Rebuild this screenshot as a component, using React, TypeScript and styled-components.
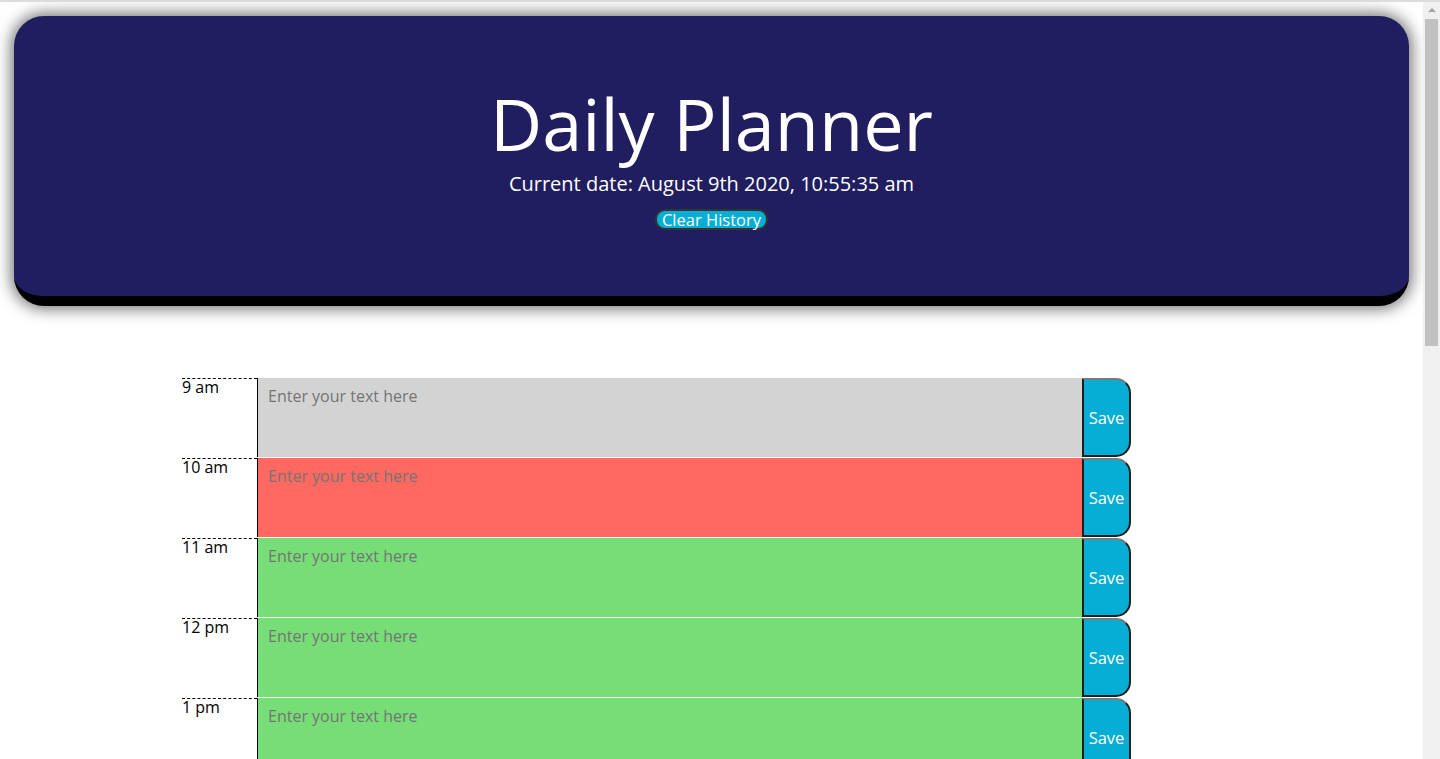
import { createGlobalStyle } from 'styled-components'
import styled from 'styled-components'

type Status = 'past' | 'present' | 'future'

interface IHourRow {
  label: string
  status: Status
}

const hours: IHourRow[] = [
  { label: '9 am', status: 'past' },
  { label: '10 am', status: 'present' },
  { label: '11 am', status: 'future' },
  { label: '12 pm', status: 'future' },
  { label: '1 pm', status: 'future' },
  { label: '2 pm', status: 'future' },
  { label: '3 pm', status: 'future' },
  { label: '4 pm', status: 'future' },
  { label: '5 pm', status: 'future' },
]

const statusColors: Record<Status, string> = {
  past: '#d3d3d3',
  present: '#ff6961',
  future: '#77dd77',
}

const App = () => {
  return (
    <>
      <GlobalStyle />
      <StyledHeader>
        <StyledTitle>Daily Planner</StyledTitle>
        <StyledLead>Current date: August 9th 2020, 10:55:35 am</StyledLead>
        <StyledClearButton>Clear History</StyledClearButton>
      </StyledHeader>
      <StyledPlanner>
        {hours.map((hour) => (
          <StyledRow key={hour.label}>
            <StyledHour>{hour.label}</StyledHour>
            <StyledTextarea $status={hour.status} placeholder="Enter your text here" />
            <StyledSaveButton>Save</StyledSaveButton>
          </StyledRow>
        ))}
      </StyledPlanner>
      {/* window scrollbar, drawn since the headless page hides its own */}
      <StyledScrollbar>
        <StyledScrollArrow />
        <StyledScrollThumb />
      </StyledScrollbar>
    </>
  )
}

export default App

const GlobalStyle = createGlobalStyle`
  html {
    border-top: 2px solid #dcdcdc;
  }

  body {
    margin: 0 17px 0 0;
    font-family: 'Open Sans', 'Noto Sans', sans-serif;
    font-size: 16px;
    line-height: 1;
    color: #000;
    background: #fff;
  }

  ::-webkit-scrollbar {
    width: 0;
  }
`

const StyledHeader = styled.header`
  margin: 14px 14px 0;
  padding: 64px 32px 0;
  height: 216px;
  box-sizing: content-box;
  background: #201e5f;
  color: #fff;
  text-align: center;
  border-radius: 30px;
  border-bottom: 10px solid #000;
  box-shadow: 0 0 15px 3px rgba(0, 0, 0, 0.55);
`

const StyledTitle = styled.h1`
  margin: 0;
  font-size: 72px;
  font-weight: 400;
  line-height: 1.2;
`

const StyledLead = styled.p`
  margin: 3px 0 0;
  font-size: 20px;
  line-height: 1.5;
`

const StyledClearButton = styled.button`
  display: inline-block;
  margin-top: 10px;
  padding: 0 5px;
  font-family: inherit;
  font-size: 16.5px;
  line-height: 17px;
  color: #fff;
  background: #06aed5;
  border: 2px solid #333;
  border-radius: 10px;
`

const StyledPlanner = styled.main`
  padding: 71px 0 40px 182px;
`

const StyledRow = styled.div`
  display: grid;
  grid-template-columns: 75px 825px 49px;
  height: 80px;
  box-sizing: border-box;
  border-top: 1px solid #fff;
`

const StyledHour = styled.div`
  border-top: 1px dashed #000;
  background: #fff;
  color: #000;
`

const StyledTextarea = styled.textarea<{ $status: Status }>`
  margin: 0;
  padding: 10px;
  box-sizing: border-box;
  height: 100%;
  resize: none;
  border: none;
  border-left: 1px solid #000;
  outline: none;
  font-family: inherit;
  font-size: 16px;
  line-height: 1;
  color: #fff;
  background: ${({ $status }) => statusColors[$status]};

  &::placeholder {
    color: #757575;
  }
`

const StyledSaveButton = styled.button`
  margin: 0;
  padding: 0;
  height: 100%;
  box-sizing: border-box;
  font-family: inherit;
  font-size: 16.5px;
  color: #fff;
  background: #06aed5;
  border: 2px solid #1e1e1e;
  border-top-color: #7a7a7a;
  border-radius: 0 15px 15px 0;
`

const StyledScrollbar = styled.div`
  position: fixed;
  top: 2px;
  right: 0;
  bottom: 0;
  width: 17px;
  display: flex;
  flex-direction: column;
  align-items: center;
  background: #f0f0f0;
`

const StyledScrollArrow = styled.div`
  margin-top: 6px;
  width: 0;
  height: 0;
  border-left: 4px solid transparent;
  border-right: 4px solid transparent;
  border-bottom: 4px solid #a3a3a3;
`

const StyledScrollThumb = styled.div`
  margin-top: 7px;
  width: 13px;
  height: 327px;
  background: #c1c1c1;
`
